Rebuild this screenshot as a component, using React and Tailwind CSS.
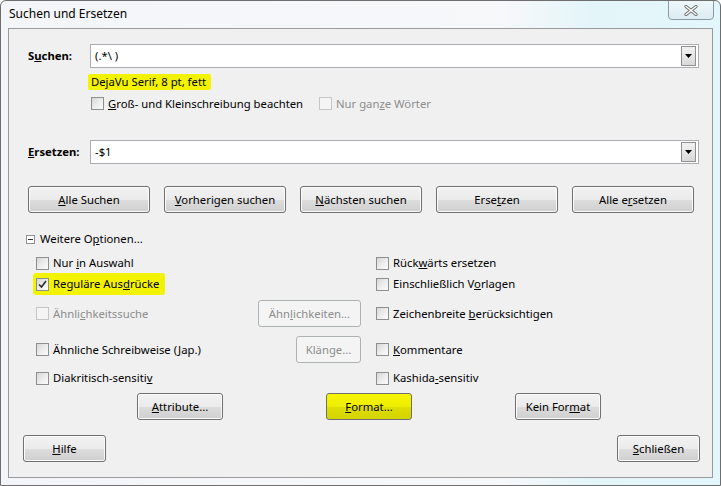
import React from 'react'

const font = { fontFamily: '"Noto Sans", "Open Sans", sans-serif' }

function Box({ checked, disabled }) {
  return (
    <span
      className={`relative flex h-[13px] w-[13px] shrink-0 items-center justify-center border ${
        disabled
          ? 'border-[#c6c6c6] bg-[#f4f4f4]'
          : 'border-[#8e8f8f] bg-[linear-gradient(135deg,#d6d6d6_0%,#eeeeee_55%,#fbfbfb_100%)]'
      }`}
    >
      {checked && (
        <svg width="9" height="9" viewBox="0 0 9 9">
          <path d="M1 4.5 L3.5 7 L8 1" fill="none" stroke="#2b2b2b" strokeWidth="1.6" />
        </svg>
      )}
    </span>
  )
}

function Check({ children, checked, disabled }) {
  return (
    <div className={`flex items-center gap-[4px] whitespace-nowrap ${disabled ? 'text-[#8d8d8d]' : 'text-black'}`}>
      <Box checked={checked} disabled={disabled} />
      <span className="leading-none">{children}</span>
    </div>
  )
}

function Btn({ children, w, disabled, yellow }) {
  let look = 'border-[#707070] text-black shadow-[inset_0_0_0_1px_#fbfbfb] bg-[linear-gradient(to_bottom,#f2f2f2_0%,#ebebeb_50%,#dddddd_51%,#cfcfcf_100%)]'
  if (disabled) look = 'border-[#adb2b5] text-[#8d8d8d] bg-[#f4f4f4]'
  if (yellow) look = 'border-[#707070] text-black bg-[linear-gradient(to_bottom,#f6f600_0%,#eeee00_50%,#dede00_51%,#d4d400_100%)]'
  return (
    <div className={`flex h-[27px] shrink-0 items-center justify-center whitespace-nowrap rounded-[3px] border ${look} ${w}`}>
      <span className="leading-none">{children}</span>
    </div>
  )
}

function Combo({ value }) {
  return (
    <div className="flex h-[24px] w-[609px] items-center justify-between border border-[#abadb3] bg-white pl-[4px] pr-[2px]">
      <span className="leading-none">{value}</span>
      <div className="flex h-[20px] w-[15px] items-center justify-center border border-[#8e8f8f] bg-[linear-gradient(to_bottom,#f2f2f2,#d8d8d8)]">
        <svg width="7" height="4" viewBox="0 0 7 4">
          <path d="M0 0 H7 L3.5 4 Z" fill="#000" />
        </svg>
      </div>
    </div>
  )
}

export default function App() {
  return (
    <div
      style={font}
      className="flex h-[486px] w-[721px] flex-col overflow-hidden rounded-t-[6px] border border-[#6e6e6e] bg-[linear-gradient(to_right,#f3f5f8_0%,#f6f8fa_70%,#e4f5f9_82%,#e2f6fb_100%)] text-[11.3px] text-black"
    >
      {/* title bar */}
      <div className="flex h-[27px] shrink-0 items-start justify-between">
        <span className="mt-[7px] pl-[8px] text-[12px] leading-none">Suchen und Ersetzen</span>
        <div className="-mt-px mr-[6px] flex h-[20px] w-[46px] items-center justify-center rounded-b-[4px] border border-[#8c9aa4] bg-[linear-gradient(to_bottom,#eef8fb,#dcecf2)]">
          <svg width="14" height="11" viewBox="0 0 14 11">
            <path d="M2 1.5 L12 9.5 M12 1.5 L2 9.5" stroke="#6d6d6d" strokeWidth="3.2" strokeLinecap="round" />
            <path d="M2 1.5 L12 9.5 M12 1.5 L2 9.5" stroke="#ffffff" strokeWidth="1.4" strokeLinecap="round" />
          </svg>
        </div>
      </div>

      {/* panel */}
      <div className="ml-[7px] flex h-[450px] w-[705px] shrink-0 flex-col border border-[#9a9a9a] bg-[#f0f0f0]">
        {/* Suchen */}
        <div className="mt-[15px] flex items-center pl-[19px]">
          <span className="w-[62px] whitespace-nowrap font-bold leading-none">S<u>u</u>chen:</span>
          <Combo value="(.*\ )" />
        </div>

        <div className="ml-[79px] mt-[6px] flex h-[16px] w-[123px] items-center whitespace-nowrap rounded-[2px] bg-[#f3f300] pl-[3px]">
          <span className="leading-none">DejaVu Serif, 8 pt, fett</span>
        </div>

        <div className="ml-[82px] mt-[7px] flex h-[13px] items-center">
          <div className="w-[228px]">
            <Check><u>G</u>roß- und Kleinschreibung beachten</Check>
          </div>
          <Check disabled>Nur gan<u>z</u>e Wörter</Check>
        </div>

        {/* Ersetzen */}
        <div className="mt-[30px] flex items-center pl-[19px]">
          <span className="w-[62px] whitespace-nowrap font-bold leading-none"><u>E</u>rsetzen:</span>
          <Combo value="-$1" />
        </div>

        {/* main buttons */}
        <div className="ml-[19px] mt-[22px] flex gap-[14px]">
          <Btn w="w-[122px]"><u>A</u>lle Suchen</Btn>
          <Btn w="w-[122px]"><u>V</u>orherigen suchen</Btn>
          <Btn w="w-[122px]"><u>N</u>ächsten suchen</Btn>
          <Btn w="w-[122px]">Erse<u>t</u>zen</Btn>
          <Btn w="w-[122px]">Alle e<u>r</u>setzen</Btn>
        </div>

        {/* Weitere Optionen */}
        <div className="ml-[17px] mt-[18px] flex h-[16px] items-center gap-[5px]">
          <span className="flex h-[9px] w-[9px] items-center justify-center border border-[#919191] bg-white">
            <span className="h-px w-[5px] bg-[#333]" />
          </span>
          <span className="whitespace-nowrap leading-none">Weitere O<u>p</u>tionen...</span>
        </div>

        {/* options */}
        <div className="mt-[6px] flex h-[20px] items-center">
          <div className="w-[352px] pl-[27px]">
            <Check>Nur <u>i</u>n Auswahl</Check>
          </div>
          <div className="pl-[15px]">
            <Check>Rück<u>w</u>ärts ersetzen</Check>
          </div>
        </div>

        <div className="mt-[1px] flex h-[20px] items-center">
          <div className="w-[352px] pl-[24px]">
            <div className="flex h-[22px] w-[132px] items-center rounded-[3px] bg-[#f3f300] pl-[3px]">
              <Check checked>Reguläre Aus<u>d</u>rücke</Check>
            </div>
          </div>
          <div className="pl-[15px]">
            <Check>Einschließlich V<u>o</u>rlagen</Check>
          </div>
        </div>

        <div className="mt-[6px] flex h-[27px] items-center">
          <div className="flex w-[352px] items-center justify-between pl-[27px]">
            <Check disabled>Ähnli<u>c</u>hkeitssuche</Check>
            <Btn w="w-[103px]" disabled>Ähn<u>l</u>ichkeiten...</Btn>
          </div>
          <div className="pl-[15px]">
            <Check>Zeichenbreite <u>b</u>erücksichtigen</Check>
          </div>
        </div>

        <div className="mt-[9px] flex h-[27px] items-center">
          <div className="flex w-[352px] items-center justify-between pl-[27px]">
            <Check>Ähnliche Schreibweise (<u>J</u>ap.)</Check>
            <Btn w="w-[65px]" disabled>Klänge...</Btn>
          </div>
          <div className="pl-[15px]">
            <Check><u>K</u>ommentare</Check>
          </div>
        </div>

        <div className="mt-[5px] flex h-[20px] items-center">
          <div className="w-[352px] pl-[27px]">
            <Check>Diakritisch-sensiti<u>v</u></Check>
          </div>
          <div className="pl-[15px]">
            <Check>Kashida<u>-</u>sensitiv</Check>
          </div>
        </div>

        <div className="ml-[128px] mt-[5px] flex gap-[103px]">
          <Btn w="w-[86px]"><u>A</u>ttribute...</Btn>
          <Btn w="w-[86px]" yellow><u>F</u>ormat...</Btn>
          <Btn w="w-[86px]">Kein For<u>m</u>at</Btn>
        </div>

        <div className="mt-[15px] flex justify-between pl-[14px] pr-[12px]">
          <Btn w="w-[83px]"><u>H</u>ilfe</Btn>
          <Btn w="w-[83px]"><u>S</u>chließen</Btn>
        </div>
      </div>
    </div>
  )
}
